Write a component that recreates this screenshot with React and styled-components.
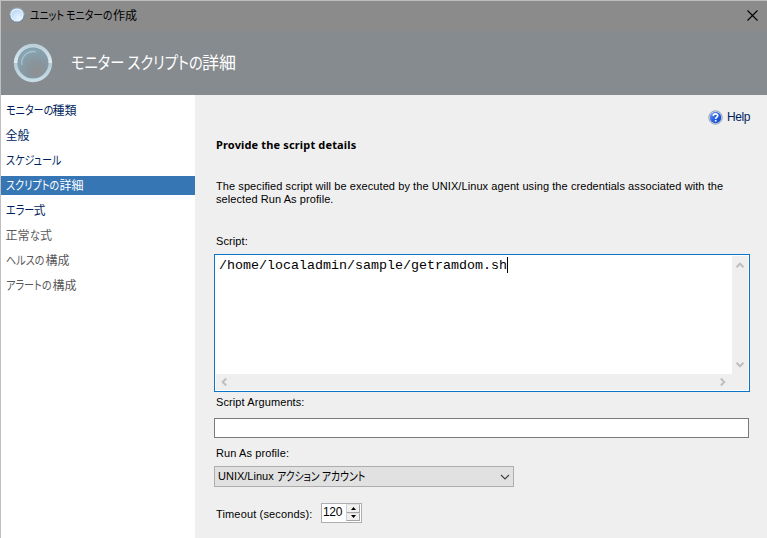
import React from "react";
import styled, { createGlobalStyle } from "styled-components";

const Global = createGlobalStyle`
  * { box-sizing: border-box; }
  body { margin: 0; overflow: hidden; }
`;

const Window = styled.div`
  width: 767px;
  height: 538px;
  border-top: 1px solid #bfbfbf;
  border-left: 1px solid #bfbfbf;
  background: #efefef;
  display: flex;
  flex-direction: column;
  overflow: hidden;
  font-family: "Liberation Sans", "Noto Sans CJK JP", sans-serif;
  font-size: 11px;
  color: #000;
`;

const Text = styled.span`
  display: block;
  white-space: nowrap;
  letter-spacing: ${(p) => p.$track || 0}px;
`;

const Mixed = styled.span`
  display: flex;
  white-space: nowrap;
`;

const KanaBox = styled.span`
  display: block;
  width: ${(p) => p.$width}px;
`;

const KanaText = styled.span`
  display: inline-block;
  font-feature-settings: "palt";
  transform: scaleX(${(p) => p.$scale});
  transform-origin: 0 50%;
`;

const Kana = ({ width, scale = 0.84, children }) => (
  <KanaBox $width={width}>
    <KanaText $scale={scale}>{children}</KanaText>
  </KanaBox>
);

const TitleBar = styled.header`
  flex: none;
  height: 30px;
  background: #8b8b8b;
  display: flex;
  align-items: center;
  padding: 0 9px 0 8px;
  font: 12px/28px "Noto Sans CJK JP", sans-serif;
  & > svg { margin-bottom: 2px; }
  & > svg:last-child { margin-left: auto; }
`;

const TitleText = styled(Mixed)`
  margin: 0 0 2px 5px;
`;

const Banner = styled.div`
  flex: none;
  height: 64px;
  background: #868b8f;
  color: #fff;
  display: flex;
  align-items: center;
  padding-left: 12px;
  font: 17px/62px "Noto Sans CJK JP", sans-serif;
`;

const BannerText = styled(Mixed)`
  margin: 0 0 2px 18px;
`;

const Body = styled.div`
  flex: 1;
  display: flex;
`;

const Steps = styled.nav`
  width: 194px;
  flex: none;
  background: #fff;
  padding-top: 6px;
  display: flex;
  flex-direction: column;
  gap: 6px;
`;

const Step = styled.div`
  height: 19px;
  padding-left: 4.5px;
  font: 12px/17px "Noto Sans CJK JP", sans-serif;
  color: ${(p) => (p.$state === "active" ? "#fff" : p.$state === "off" ? "#595959" : "#001f60")};
  background: ${(p) => (p.$state === "active" ? "#3676b5" : "transparent")};
`;

const Content = styled.main`
  flex: 1;
  padding: 14px 17px 0 19px;
  display: flex;
  flex-direction: column;
`;

const Help = styled.div`
  height: 18px;
  align-self: flex-end;
  display: flex;
  gap: 4px;
  font-size: 12px;
  line-height: 17px;
  color: #001f60;
  & > svg { margin-top: 1px; }
`;

const Heading = styled.h1`
  margin: 10px 0 0 2px;
  height: 16px;
  font: bold 11px/16px "Noto Sans", sans-serif;
  letter-spacing: ${(p) => p.$track}px;
`;

const Description = styled.div`
  margin: 27px 0 0 2px;
  height: 26px;
  line-height: 13px;
`;

const Label = styled.label`
  display: block;
  height: 14px;
  line-height: 14px;
  letter-spacing: 0.1px;
  margin: ${(p) => p.$top}px 0 0 2px;
`;

const ScriptBox = styled.div`
  margin-top: 6px;
  height: 138px;
  width: 536px;
  border: 1px solid #0a74c8;
  background: #fff;
  padding: 1px;
  display: grid;
  grid-template-columns: 1fr 16px;
  grid-template-rows: 1fr 16px;
`;

const Code = styled.div`
  display: flex;
  height: 20px;
  padding: 1px 0 0 3px;
  font: 13.33px/18px "Liberation Mono", monospace;
`;

const Caret = styled.i`
  width: 1px;
  height: 16px;
  background: #000;
`;

const Bar = styled.div`
  background: #efefef;
  display: flex;
  flex-direction: ${(p) => (p.$vertical ? "column" : "row")};
  justify-content: space-between;
  align-items: center;
  padding: ${(p) => (p.$vertical ? "5px 1px 5px 0" : "0 5px 1px 4px")};
`;

const Corner = styled.div`
  background: #efefef;
`;

const Input = styled.div`
  margin-top: 9px;
  width: 535px;
  height: 20px;
  background: #fff;
  border: 1px solid #7a7a7a;
`;

const Select = styled.div`
  margin-top: 6px;
  width: 300px;
  height: 21px;
  background: #e1e1e1;
  border: 1px solid #adadad;
  display: flex;
  justify-content: space-between;
  align-items: center;
  padding: 0 3px;
  line-height: 19px;
`;

const SelectValue = styled.span`
  display: flex;
  gap: 3px;
`;

const AccountName = styled(Mixed)`
  font: 12px/18px "Noto Sans CJK JP", sans-serif;
`;

const TimeoutRow = styled.div`
  display: flex;
  justify-content: space-between;
  width: 146px;
  margin: 16px 0 0 2px;
  height: 21px;
  line-height: 23px;
`;

const Spinner = styled.div`
  width: 41px;
  height: 20px;
  border: 1px solid #adadb3;
  background: #fff;
  display: flex;
  justify-content: space-between;
  padding: 0 1px;
  font-size: 12px;
  line-height: 17px;
`;

const Steppers = styled.div`
  width: 14px;
  display: flex;
  flex-direction: column;
  padding-bottom: 1px;
`;

const StepButton = styled.div`
  flex: 1;
  display: flex;
  align-items: center;
  justify-content: center;
  background: #f0f0f0;
  border: 1px solid #a5a5a5;
  border-top-color: #e3e3e3;
  border-left-color: #d0d0d0;
`;

const Orb = ({ size, small }) => (
  <svg width={size} height={size} viewBox="0 0 40 40">
    <defs>
      <linearGradient id={small ? "rs" : "rl"} x1="0" y1="0" x2="0" y2="1">
        <stop offset="0" stopColor={small ? "#8ba3b8" : "#b9ced9"} />
        <stop offset=".49" stopColor={small ? "#9db3c5" : "#dcebf0"} />
        <stop offset=".51" stopColor={small ? "#6c879f" : "#b4cbd6"} />
        <stop offset="1" stopColor={small ? "#738da5" : "#cbdfe7"} />
      </linearGradient>
      <radialGradient id={small ? "cs" : "cl"} cx=".65" cy=".8" r=".8">
        <stop offset="0" stopColor={small ? "#e8f5ff" : "#8f9092"} />
        <stop offset=".4" stopColor={small ? "#d6eaff" : "#88949b"} />
        <stop offset="1" stopColor={small ? "#bdd9f5" : "#86a5b4"} />
      </radialGradient>
    </defs>
    <circle cx="20" cy="20" r="19.2" fill={`url(#${small ? "rs" : "rl"})`} />
    <circle cx="20" cy="20" r={small ? 16.5 : 15.5} fill={small ? "#eef6fb" : "#7f9bab"} />
    <circle cx="20" cy="20" r={small ? 14 : 14.7} fill={`url(#${small ? "cs" : "cl"})`} />
    {!small && <path d="M8.8 22a11.5 11.5 0 0 1 14.5-13" fill="none" stroke="#a9c0cb" strokeWidth="1.3" />}
  </svg>
);

const Chevron = ({ d, color, w = 10, h = 8, sw = 2 }) => (
  <svg width={w} height={h} viewBox={`0 0 ${w} ${h}`} fill="none" stroke={color} strokeWidth={sw}>
    <path d={d} />
  </svg>
);

const HelpIcon = () => (
  <svg width="15" height="15" viewBox="0 0 15 15">
    <defs>
      <linearGradient id="hg" x1="0" y1="0" x2="1" y2="1">
        <stop offset="0" stopColor="#7ba4ee" />
        <stop offset=".5" stopColor="#2c62e0" />
        <stop offset="1" stopColor="#0b3fc0" />
      </linearGradient>
    </defs>
    <circle cx="7.5" cy="7.5" r="6.7" fill="#e0e7f2" stroke="#8496b6" strokeWidth=".9" />
    <circle cx="7.5" cy="7.5" r="5.7" fill="url(#hg)" />
    <path d="M5.2 5.9C5.3 3.2 9.9 3.2 9.8 5.8C9.7 7.3 7.6 7.2 7.6 9.1" fill="none" stroke="#fff" strokeWidth="1.6" />
    <rect x="6.8" y="10" width="1.7" height="1.6" fill="#fff" />
  </svg>
);

const steps = [
  { kana: "モニターの", width: 47, rest: "種類", state: "on" },
  { rest: "全般", state: "on" },
  { kana: "スケジュール", width: 56, state: "on" },
  { kana: "スクリプトの", width: 54, rest: "詳細", state: "active" },
  { kana: "エラー", width: 28, rest: "式", state: "on" },
  { lead: "正常", kana: "な", width: 10.5, rest: "式", state: "off" },
  { kana: "ヘルスの", width: 40, rest: "構成", state: "off" },
  { kana: "アラートの", width: 47, rest: "構成", state: "off" },
];

export default function App() {
  return (
    <Window>
      <Global />
      <TitleBar>
        <Orb size={16} small />
        <TitleText>
          <Kana width={83} scale={0.82}>ユニット モニターの</Kana>
          作成
        </TitleText>
        <svg width="11" height="11" viewBox="0 0 11 11" stroke="#000" strokeWidth="1.1">
          <path d="M.5 .5l10 10M10.5 .5l-10 10" />
        </svg>
      </TitleBar>
      <Banner>
        <Orb size={40} />
        <BannerText>
          <Kana width={131} scale={0.84}>モニター スクリプトの</Kana>
          詳細
        </BannerText>
      </Banner>
      <Body>
        <Steps>
          {steps.map((s) => (
            <Step key={(s.kana || "") + s.rest} $state={s.state}>
              <Mixed>
                {s.lead}
                {s.kana && <Kana width={s.width}>{s.kana}</Kana>}
                {s.rest}
              </Mixed>
            </Step>
          ))}
        </Steps>
        <Content>
          <Help>
            <HelpIcon />
            <Text $track={-0.4}>Help</Text>
          </Help>
          <Heading $track={0.15}>Provide the script details</Heading>
          <Description>
            <Text $track={0.08}>The specified script will be executed by the UNIX/Linux agent using the credentials associated with the</Text>
            <Text $track={0.08}>selected Run As profile.</Text>
          </Description>
          <Label $top={28}>Script:</Label>
          <ScriptBox>
            <Code>
              /home/localadmin/sample/getramdom.sh
              <Caret />
            </Code>
            <Bar $vertical>
              <Chevron color="#bfbfbf" d="M1.5 6.2L5 2.7L8.5 6.2" />
              <Chevron color="#bfbfbf" d="M1.5 1.8L5 5.3L8.5 1.8" />
            </Bar>
            <Bar>
              <Chevron color="#bfbfbf" w={8} h={10} d="M6.2 1.5L2.7 5L6.2 8.5" />
              <Chevron color="#bfbfbf" w={8} h={10} d="M1.8 1.5L5.3 5L1.8 8.5" />
            </Bar>
            <Corner />
          </ScriptBox>
          <Label $top={3}>Script Arguments:</Label>
          <Input />
          <Label $top={8}>Run As profile:</Label>
          <Select>
            <SelectValue>
              <Text>UNIX/Linux</Text>
              <AccountName>
                <Kana width={90} scale={0.82}>アクション アカウント</Kana>
              </AccountName>
            </SelectValue>
            <Chevron color="#444" sw={1.2} d="M1 2L5 6L9 2" />
          </Select>
          <TimeoutRow>
            <Text $track={0.15}>Timeout (seconds):</Text>
            <Spinner>
              <Text $track={-0.3}>120</Text>
              <Steppers>
                <StepButton>
                  <svg width="5" height="3" viewBox="0 0 5 3"><path d="M0 3L2.5 0L5 3z" /></svg>
                </StepButton>
                <StepButton>
                  <svg width="5" height="3" viewBox="0 0 5 3"><path d="M0 0L2.5 3L5 0z" /></svg>
                </StepButton>
              </Steppers>
            </Spinner>
          </TimeoutRow>
        </Content>
      </Body>
    </Window>
  );
}
